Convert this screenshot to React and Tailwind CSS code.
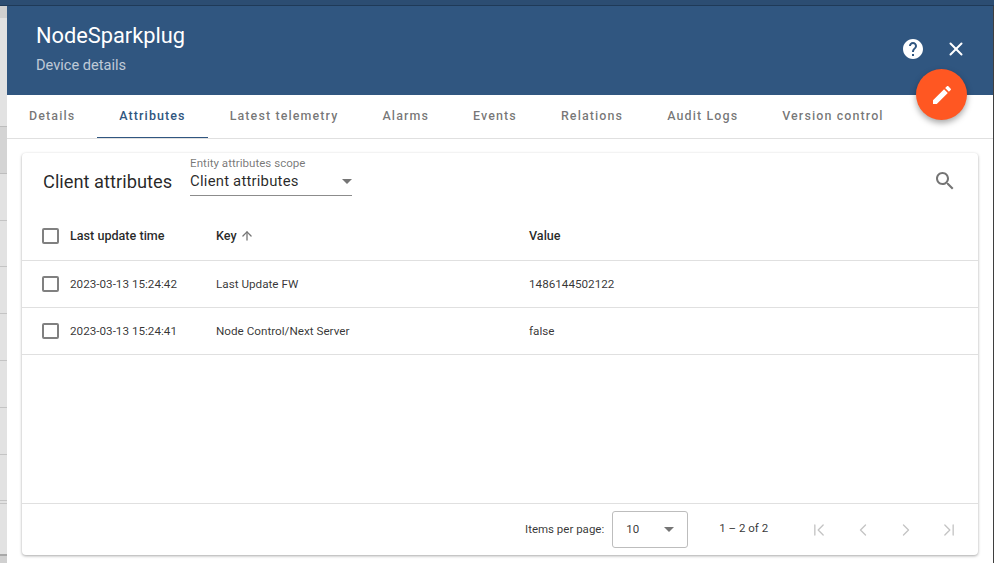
import { ArrowUp, ChevronFirst, ChevronLast, ChevronLeft, ChevronRight, X } from 'lucide-react'

const tabs = ['Details', 'Attributes', 'Latest telemetry', 'Alarms', 'Events', 'Relations', 'Audit Logs', 'Version control']

const rows = [
  { time: '2023-03-13 15:24:42', key: 'Last Update FW', value: '1486144502122' },
  { time: '2023-03-13 15:24:41', key: 'Node Control/Next Server', value: 'false' },
]

function Checkbox() {
  return <div className="h-[16px] w-[17px] shrink-0 rounded-[2px] border-2 border-[#808080] bg-white"></div>
}

export default function App() {
  return (
    <div className="relative flex h-[563px] w-[994px] flex-col overflow-hidden bg-[#3f3f3f] font-['Roboto',sans-serif]">
      <div className="h-[6px] shrink-0 border-b border-[#1f3a58] bg-[#2c4d72]"></div>

      <div className="flex min-h-0 flex-1">
        <div className="flex w-[7px] shrink-0 flex-col bg-[#e2e2e2]">
          <div className="h-[12px] bg-[#d0d0d0]"></div>
          <div className="h-[108px]"></div>
          <div className="h-[48px] border-y border-[#bdbdbd] bg-[#d4d4d4]"></div>
          <div className="h-[47px] border-b border-[#c4c4c4]"></div>
          <div className="h-[46px] border-b border-[#c4c4c4]"></div>
          <div className="h-[47px] border-b border-[#c4c4c4]"></div>
          <div className="h-[47px] border-b border-[#c4c4c4]"></div>
          <div className="h-[47px] border-b border-[#c4c4c4]"></div>
          <div className="h-[47px] border-b border-[#c4c4c4]"></div>
          <div className="h-[46px] border-b border-[#c4c4c4]"></div>
          <div className="h-[3px] border-b border-[#c4c4c4]"></div>
          <div className="h-[52px] border-b-2 border-[#a8a8a8]"></div>
          <div className="flex-1 bg-[#d0d0d0]"></div>
        </div>

        <div className="flex min-w-0 flex-1 flex-col bg-white">
          <header className="flex h-[89px] shrink-0 flex-col bg-[#305680] pl-[29px] pt-[16px]">
            <h1 className="text-[21.8px] leading-[28px] text-white">NodeSparkplug</h1>
            <p className="mt-[7px] text-[14.6px] leading-[16px] text-white/70">Device details</p>
          </header>

          <nav className="flex h-[44px] shrink-0 border-b border-[#e0e0e0]">
            {tabs.map((tab) => (
              <div
                key={tab}
                className={
                  tab === 'Attributes'
                    ? 'flex items-center border-b-[1.5px] border-[#305680] px-[22px] text-[12.5px] font-medium tracking-[1.1px] text-[#305680]'
                    : 'flex items-center px-[22px] text-[12.5px] font-medium tracking-[1.1px] text-[#000000]/55'
                }
              >
                {tab}
              </div>
            ))}
          </nav>

          <div className="flex min-h-0 flex-1 px-[15px] pt-[14px]">
            <section className="mb-[8px] flex min-w-0 flex-1 flex-col rounded-[4px] bg-white shadow-[0_1px_3px_rgba(0,0,0,0.35)]">
              <div className="flex h-[58px] shrink-0 items-center pl-[21px] pr-[21px]">
                <span className="text-[18.3px] leading-[24px] text-black/85">Client attributes</span>
                <div className="ml-[18px] mt-[-13px] w-[162px] border-b border-[#8c8c8c] pb-[3px]">
                  <div className="text-[11.6px] leading-[14px] text-black/55">Entity attributes scope</div>
                  <div className="flex h-[22px] items-center justify-between">
                    <span className="text-[14.9px] leading-[20px] tracking-[0.2px] text-black/85">Client attributes</span>
                    <span className="mt-[2px] h-0 w-0 border-x-[5px] border-t-[5px] border-x-transparent border-t-[#757575]"></span>
                  </div>
                </div>
                <svg viewBox="0 0 24 24" className="ml-auto mt-[-3px] h-[24px] w-[24px] fill-[#757575]">
                  <path d="M15.5 14h-.79l-.28-.27C15.41 12.59 16 11.11 16 9.5 16 5.91 13.09 3 9.5 3S3 5.91 3 9.5 5.91 16 9.5 16c1.61 0 3.09-.59 4.23-1.57l.27.28v.79l5 4.99L20.49 19l-4.99-5zm-6 0C7.01 14 5 11.99 5 9.5S7.01 5 9.5 5 14 7.01 14 9.5 11.99 14 9.5 14z" />
                </svg>
              </div>

              <div className="flex h-[50px] shrink-0 items-center border-b border-[#e0e0e0] pl-[20px] text-[12.6px] font-medium text-black/85">
                <Checkbox />
                <div className="ml-[11px] mt-[1px] w-[146px]">Last update time</div>
                <div className="mt-[1px] flex w-[313px] items-center gap-[3px]">
                  Key <ArrowUp size={14} className="text-[#757575]" strokeWidth={2.2} />
                </div>
                <div className="mt-[1px]">Value</div>
              </div>

              {rows.map((row) => (
                <div key={row.key} className="flex h-[47px] shrink-0 items-center border-b border-[#e0e0e0] pl-[20px] text-[11.7px] text-black/80">
                  <Checkbox />
                  <div className="ml-[11px] mt-[1px] w-[146px]">{row.time}</div>
                  <div className="mt-[1px] w-[313px]">{row.key}</div>
                  <div className="mt-[1px]">{row.value}</div>
                </div>
              ))}

              <div className="mt-auto flex h-[52px] shrink-0 items-center border-t border-[#e0e0e0] text-[11.5px] text-black/80">
                <span className="ml-[503px]">Items per page:</span>
                <div className="ml-[8px] flex h-[37px] w-[76px] items-center justify-between rounded-[3px] border border-[#bdbdbd] pl-[13px] pr-[13px]">
                  <span>10</span>
                  <span className="h-0 w-0 border-x-[5px] border-t-[5px] border-x-transparent border-t-[#757575]"></span>
                </div>
                <span className="ml-[31px] mt-[-2px]">1 – 2 of 2</span>
                <div className="ml-[41px] flex gap-[23.4px] text-[#c4c4c4]">
                  <ChevronFirst size={20} strokeWidth={1.6} />
                  <ChevronLeft size={20} strokeWidth={1.6} />
                  <ChevronRight size={20} strokeWidth={1.6} />
                  <ChevronLast size={20} strokeWidth={1.6} />
                </div>
              </div>
            </section>
          </div>
        </div>

        <div className="w-px shrink-0 bg-[#3f3f3f]"></div>
      </div>

      <svg viewBox="0 0 24 24" className="absolute left-[901px] top-[37px] h-[24px] w-[24px] fill-white">
        <path d="M12 2C6.48 2 2 6.48 2 12s4.48 10 10 10 10-4.48 10-10S17.52 2 12 2zm1 17h-2v-2h2v2zm2.07-7.75l-.9.92C13.45 12.9 13 13.5 13 15h-2v-.5c0-1.1.45-2.1 1.17-2.83l1.24-1.26c.37-.36.59-.86.59-1.41 0-1.1-.9-2-2-2s-2 .9-2 2H8c0-2.21 1.79-4 4-4s4 1.79 4 4c0 .88-.36 1.68-.93 2.25z" />
      </svg>
      <X className="absolute left-[945px] top-[38px] text-white" size={22} strokeWidth={2.2} />

      <div className="absolute left-[916px] top-[69px] flex h-[51px] w-[51px] items-center justify-center rounded-full bg-[#ff5722] shadow-[0_3px_6px_rgba(0,0,0,0.35)]">
        <svg viewBox="0 0 24 24" className="h-[24px] w-[24px] fill-white">
          <path d="M3 17.25V21h3.75L17.81 9.94l-3.75-3.75L3 17.25zM20.71 7.04c.39-.39.39-1.02 0-1.41l-2.34-2.34c-.39-.39-1.02-.39-1.41 0l-1.83 1.83 3.75 3.75 1.83-1.83z" />
        </svg>
      </div>
    </div>
  )
}
